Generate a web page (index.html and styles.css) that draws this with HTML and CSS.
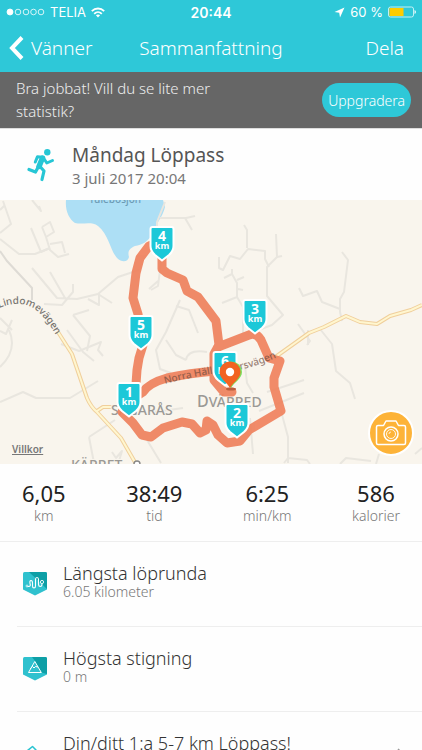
FILE: index.html
```html
<!DOCTYPE html>
<html lang="sv">
<head>
    <meta charset="UTF-8">
    <meta name="viewport" content="width=device-width, initial-scale=1.0">
    <title>Sammanfattning</title>
    <link rel="stylesheet" href="styles.css">
</head>
<body>
    <div class="app-container">
        <header class="top-bar">
            <div class="status-bar">
                <div class="status-left">
                    <svg class="signal" width="39" height="8" viewBox="0 0 39 8" fill="none" stroke="#fff" stroke-width="0.8">
                        <circle cx="4" cy="4" r="3" fill="#fff"/>
                        <circle cx="12" cy="4" r="2.8"/>
                        <circle cx="20" cy="4" r="2.8"/>
                        <circle cx="27.5" cy="4" r="2.8"/>
                        <circle cx="35" cy="4" r="2.8"/>
                    </svg>
                    <span>TELIA</span>
                    <svg width="14" height="11" viewBox="0 0 14 11" fill="none" stroke="#fff" stroke-width="1.8">
                        <path d="M0.8 4.2C4.4 0.6 9.6 0.6 13.2 4.2"/>
                        <path d="M3.2 6.8C5.4 4.6 8.6 4.6 10.8 6.8"/>
                        <path d="M4.9 8.3C6.1 7.2 7.9 7.2 9.1 8.3L7 10.6Z" fill="#fff" stroke="none"/>
                    </svg>
                </div>
                <div class="status-time">20:44</div>
                <div class="status-right">
                    <svg width="11" height="11" viewBox="0 0 11 11" fill="#fff">
                        <path d="M10.5 0.5L6 10.5L5.2 5.8L0.5 5Z"/>
                    </svg>
                    <span>60 %</span>
                    <svg width="28" height="12" viewBox="0 0 28 12">
                        <rect x="0.5" y="1" width="25" height="10" rx="2" fill="none" stroke="#c5f0f4"/>
                        <rect x="1.5" y="2" width="14" height="8" fill="#ffcc00"/>
                        <path d="M26.5 4v4q1.5-0.6 1.5-2t-1.5-2z" fill="#e8fafb"/>
                    </svg>
                </div>
            </div>
            <nav class="nav-bar">
                <a href="#" class="nav-link">
                    <svg width="15" height="24" viewBox="0 0 15 24" fill="none" stroke="#fff" stroke-width="4">
                        <path d="M13 1.5L3 12L13 22.5"/>
                    </svg>
                    Vänner
                </a>
                <h1 class="nav-title">Sammanfattning</h1>
                <a href="#" class="nav-link nav-share">Dela</a>
            </nav>
        </header>

        <section class="banner">
            <p class="banner-text">Bra jobbat! Vill du se lite mer statistik?</p>
            <button type="button" class="upgrade-button">Uppgradera</button>
        </section>

        <section class="workout">
            <svg class="runner" width="28" height="34" viewBox="0 0 28 34" fill="none" stroke="#26c6d5" stroke-linecap="round" stroke-linejoin="round">
                <circle cx="20.3" cy="4.2" r="3.2" fill="#26c6d5" stroke="none"/>
                <path d="M8.3 14L10.5 8.7L15.5 9.2" stroke-width="3"/>
                <path d="M15.5 10L12 18.5" stroke-width="5.5"/>
                <path d="M16.5 10L19.8 15L25.5 12.5" stroke-width="3"/>
                <path d="M11.5 18.5L8.5 24L2 21.5" stroke-width="3.2"/>
                <path d="M13 18.5L17 23L15 31.5" stroke-width="3.2"/>
            </svg>
            <div>
                <h2 class="workout-title">Måndag Löppass</h2>
                <div class="workout-date">3 juli 2017 20:04</div>
            </div>
        </section>

        <section class="map-container">
            <svg class="map" viewBox="0 200 422 264">
                <defs>
                    <path id="badge" d="M-9.5 -15H9.5Q11.5 -15 11.5 -13V4Q11.5 9 7 13L0 18.5L-7 13Q-11.5 9 -11.5 4V-13Q-11.5 -15 -9.5 -15Z"/>
                    <path id="lindome" d="M-1 308Q20 299 36 310Q48 319 64 349"/>
                    <path id="norra" d="M165 384Q190 377 218 373Q250 371 286 353"/>
                </defs>

                <!-- vatten -->
                <path class="lake" d="M66 200C65 211 69 219 75 223C83 225 91 221 98 226C109 235 110 250 117 258C122 263 128 262 129 257C127 250 131 248 135 246C142 245 148 242 154 232C155 224 163 217 165 207L163 200Z"/>

                <!-- småvägar -->
                <g class="streets">
                    <path d="M0 210L5 205M3 201L11 224L0 233M32 200L41 211L39 206M0 239L19 254H35L50 248"/>
                    <path d="M31 228L41 252L50 248M42 227L50 222L54 232L46 237L42 227M46 237L50 250L58 257L69 254M50 244L62 242L65 253"/>
                    <path d="M32 268L57 298L77 299L98 294L118 277L139 270M50 272L65 298M73 284V292L62 305L44 304M98 294L112 303M88 299L99 305V293"/>
                    <path d="M165 202L157 222V231M160 218H186L195 216M185 218L192 230M161 262L158 286L151 290M158 281L149 289"/>
                    <path d="M180 300L166 332L156 350L160 369L171 373M176 306L189 310L198 333M186 360Q188 349 207 352M166 340L176 355L186 360"/>
                    <path d="M73 315L90 336L87 351M73 315L89 310M0 318L12 330M0 331L6 334L12 320M9 330Q18 350 0 367"/>
                    <path d="M67 330L83 352L94 361M61 344L79 351L101 342L98 350L103 356M0 402L23 392L36 398H70L98 381"/>
                    <path d="M89 437L115 420M89 437L94 463M112 452L116 458L122 451L119 461M147 440L161 463M155 412L183 408"/>
                    <path d="M244 225L247 230V248M219 257V268L223 270L230 256L240 259L248 249L265 251V259L269 267M276 234L277 257L267 267V296L283 315L272 325L253 332"/>
                    <path d="M232 269V274L237 283V297L243 307V333M224 278L232 274M237 280L244 277M238 289L243 290M237 297L222 303M277 257L282 256"/>
                    <path d="M342 252L348 260L344 292L340 299V312L342 321M299 288L303 296L317 291L322 302L340 309M298 324L310 341L307 345"/>
                    <path d="M320 329L332 344L336 371L350 383L355 399M267 392L304 380M259 411L304 393M281 411L288 437V463M250 418L253 454M284 463L288 458L307 460L310 464M340 464L346 458L371 461M376 464L379 454M415 454L422 448"/>
                    <path d="M245 366L247 383L253 393M308 330V345"/>
                </g>
                <path class="street-line" d="M0 251L7 261L32 288V300"/>

                <!-- större vägar -->
                <path class="road-edge" d="M58 332L72 354L87 398Q91 407 97 412L121 438L136 464M97 411L103 407H115M274 358L309 333L324 327L346 316L360 322L377 324L390 316L411 310L422 305"/>
                <path class="road-core" d="M58 332L72 354L87 398Q91 407 97 412L121 438L136 464M97 411L103 407H115M274 358L309 333L324 327L346 316L360 322L377 324L390 316L411 310L422 305"/>

                <g class="map-text">
                    <text class="water-name" x="89" y="203">Tulebosjön</text>
                    <text class="place" x="111" y="415">SAGARÅS</text>
                    <text class="place" x="197" y="407"><tspan class="place-first">D</tspan>VÄRRED</text>
                    <text class="place" x="71" y="470">KÄRRET</text>
                    <text class="road-name"><textPath href="#lindome">Lindomevägen</textPath></text>
                </g>
                <circle cx="137" cy="464" r="3" fill="#fff" stroke="#888" stroke-width="1.4"/>

                <!-- löprundan -->
                <g class="route">
                    <path d="M229 374L215 371Q190 373 167 378Q149 383 143 392L129 401L122 412L133 423L142 435L151 437L163 428L182 422L192 424L200 433L206 430L207 421L213 425L218 435L227 443L240 441L249 430L281 411L274 387V378L280 361L269 358L261 340Q256 332 249 335L218 347"/>
                    <path d="M135 398L137 370L139 358L143 345L138 314L133 298L136 273L140 258L149 246L162 240V269L167 273L183 280L187 291L198 297L216 321L219 345L214 354V380L224 392H232"/>
                </g>
                <text class="road-name road-over"><textPath href="#norra">Norra Hällesåkersvägen</textPath></text>

                <!-- kilometermarkörer -->
                <g class="marker" transform="translate(255 315)"><use href="#badge"/><text class="marker-num" y="-1">3</text><text class="marker-unit" y="7">km</text></g>
                <g class="marker" transform="translate(162 242)"><use href="#badge"/><text class="marker-num" y="-1">4</text><text class="marker-unit" y="7">km</text></g>
                <g class="marker" transform="translate(141 331)"><use href="#badge"/><text class="marker-num" y="-1">5</text><text class="marker-unit" y="7">km</text></g>
                <g class="marker" transform="translate(129 398)"><use href="#badge"/><text class="marker-num" y="-1">1</text><text class="marker-unit" y="7">km</text></g>
                <g class="marker" transform="translate(225 367)"><use href="#badge"/><text class="marker-num" y="-1">6</text><text class="marker-unit" y="7">km</text></g>
                <g class="marker" transform="translate(237 419)"><use href="#badge"/><text class="marker-num" y="-1">2</text><text class="marker-unit" y="7">km</text></g>

                <!-- start och mål -->
                <ellipse cx="231" cy="389" rx="5" ry="1.5" fill="#b95d3d"/>
                <path d="M231 388C228 382 221 379 221 372A10.5 10.5 0 0 1 242 372C242 379 234 382 231 388Z" fill="#7be05c"/>
                <path d="M230 388C227 382 219.5 379 219.5 372A10.5 10.5 0 0 1 240.5 372C240.5 379 233 382 230 388Z" fill="#f26322"/>
                <circle cx="230" cy="372" r="4.2" fill="#fff"/>
            </svg>
            <a href="#" class="terms-link">Villkor</a>
            <button type="button" class="camera-button" aria-label="Kamera">
                <svg width="32" height="28" viewBox="0 0 32 28" fill="none" stroke="#fff" stroke-width="1.5" stroke-linejoin="round">
                    <path d="M3 6.5H8.5L11 2H21L23.5 6.5H29Q30.5 6.5 30.5 8V24Q30.5 25.5 29 25.5H3Q1.5 25.5 1.5 24V8Q1.5 6.5 3 6.5Z"/>
                    <circle cx="16" cy="15" r="7"/>
                    <circle cx="16" cy="15" r="4.5" stroke-width="0.9"/>
                    <path d="M14 15Q14 13 16 13" stroke-width="0.8"/>
                </svg>
            </button>
        </section>

        <section class="stats">
            <div class="stat">
                <div class="stat-value">6,05</div>
                <div class="stat-label">km</div>
            </div>
            <div class="stat">
                <div class="stat-value">38:49</div>
                <div class="stat-label">tid</div>
            </div>
            <div class="stat">
                <div class="stat-value">6:25</div>
                <div class="stat-label">min/km</div>
            </div>
            <div class="stat">
                <div class="stat-value">586</div>
                <div class="stat-label">kalorier</div>
            </div>
        </section>

        <ul class="records">
            <li class="record">
                <svg class="record-icon" width="24" height="24" viewBox="0 0 24 24">
                    <path d="M1.5 0H22.5Q24 0 24 1.5V17.5L12 23.5L0 17.5V1.5Q0 0 1.5 0Z" fill="#2fc1ce"/>
                    <path d="M6 0H22.5Q24 0 24 1.5V17Z" fill="#0e9fa6"/>
                    <path d="M4.5 14.5H6Q8 14 7 11.5Q6.5 8.5 8 8.5Q9.5 8.5 9.5 11V14Q9.5 16 11 16Q12.5 16 12.5 14V7.5Q12.5 5.5 14 5.5Q15.5 5.5 15.5 7.5V12.5Q15.5 14.5 17.3 14.5Q19 14.5 19 12" fill="none" stroke="#fff" stroke-width="1.1"/>
                    <circle cx="4" cy="14" r="1" fill="none" stroke="#fff" stroke-width="0.7"/>
                    <circle cx="19" cy="10" r="1.6" fill="none" stroke="#fff" stroke-width="0.9"/>
                </svg>
                <div class="record-body">
                    <h3 class="record-title">Längsta löprunda</h3>
                    <div class="record-value">6.05 kilometer</div>
                </div>
            </li>
            <li class="record">
                <svg class="record-icon" width="24" height="24" viewBox="0 0 24 24">
                    <path d="M1.5 0H22.5Q24 0 24 1.5V17.5L12 23.5L0 17.5V1.5Q0 0 1.5 0Z" fill="#2fc1ce"/>
                    <path d="M12 4L9 0H22.5Q24 0 24 1.5V17L18.5 15.5Z" fill="#0e9fa6"/>
                    <path d="M5.5 15.5L11.8 4.5L18.3 15.5ZM7 12L9.5 9.5L11 11L12.5 9.5L15 10" fill="none" stroke="#fff" stroke-width="1" stroke-linejoin="round"/>
                </svg>
                <div class="record-body">
                    <h3 class="record-title">Högsta stigning</h3>
                    <div class="record-value">0 m</div>
                </div>
            </li>
            <li class="record">
                <svg class="record-icon" width="24" height="24" viewBox="0 0 24 24" fill="none" stroke="#2bc4d2" stroke-width="1.6" stroke-linejoin="round">
                    <path d="M4 9L9.5 4.5L12 7L22 18L17 21L4 9Z"/>
                </svg>
                <div class="record-body">
                    <h3 class="record-title">Din/ditt 1:a 5-7 km Löppass!</h3>
                </div>
                <svg class="chevron" width="8" height="14" viewBox="0 0 8 14" fill="none" stroke="#999" stroke-width="1.5">
                    <path d="M1 1L7 7L1 13"/>
                </svg>
            </li>
        </ul>
    </div>
</body>
</html>
```
FILE: styles.css
```css
* {
    margin: 0;
    padding: 0;
    box-sizing: border-box;
}

body {
    height: 100vh;
    overflow: hidden;
    background-color: #fefefe;
    font-family: 'Noto Sans', 'Open Sans', sans-serif;
    font-weight: 300;
    color: #333;
}

h1, h2, h3 {
    font-weight: inherit;
}

a {
    color: inherit;
    text-decoration: none;
}

button {
    border: none;
    font: inherit;
    color: white;
    cursor: pointer;
}

.app-container {
    width: 100%;
}

.top-bar {
    background-color: #2ec8d8;
    color: white;
}

.status-bar {
    height: 24px;
    padding: 0 6px;
    display: grid;
    grid-template-columns: 1fr auto 1fr;
    align-items: center;
    font-family: Inter, 'Liberation Sans', sans-serif;
    font-size: 13px;
    font-weight: 400;
}

.status-left, .status-right {
    display: flex;
    align-items: center;
    gap: 5px;
}

.status-right {
    justify-content: flex-end;
}

.status-time {
    font-weight: 600;
    font-size: 14px;
}

.nav-bar {
    height: 48px;
    padding: 0 9px;
    display: grid;
    grid-template-columns: 1fr auto 1fr;
    align-items: center;
    font-size: 19px;
}

.nav-link {
    display: flex;
    align-items: center;
    gap: 7px;
}

.nav-share {
    justify-content: flex-end;
    padding-right: 9px;
}

.nav-title {
    font-size: 19px;
}

.banner {
    height: 56px;
    padding: 0 11px 0 16px;
    display: flex;
    justify-content: space-between;
    align-items: center;
    background-color: #666;
    color: #eee;
}

.banner-text {
    max-width: 220px;
    font-size: 15px;
    line-height: 23px;
}

.upgrade-button {
    height: 34px;
    padding: 0 6px;
    border-radius: 17px;
    background-color: #2ec8d8;
    font-size: 14px;
}

.workout {
    height: 72px;
    padding: 0 27px;
    display: flex;
    align-items: center;
    gap: 17px;
    border-top: 1px solid #ddd;
    color: #555;
}

.workout-title {
    font-size: 19px;
    line-height: 26px;
    font-weight: 400;
}

.workout-date {
    font-size: 15px;
    line-height: 20px;
    font-weight: 400;
    color: #777;
}

.map-container {
    position: relative;
    background-color: #f9f5ed;
}

.map {
    display: block;
    width: 100%;
    height: auto;
}

.lake {
    fill: #addff5;
}

.streets {
    fill: none;
    stroke: #e9e6df;
    stroke-width: 2;
    stroke-linejoin: round;
}

.street-line {
    fill: none;
    stroke: #dedbd5;
    stroke-width: 2;
}

.road-edge {
    fill: none;
    stroke: #f0cf9c;
    stroke-width: 4;
    stroke-linejoin: round;
}

.road-core {
    fill: none;
    stroke: #fff6cf;
    stroke-width: 2;
    stroke-linejoin: round;
}

.map-text, .road-over {
    font-family: 'Noto Sans', sans-serif;
    font-weight: 500;
}

.place {
    font-size: 14px;
    fill: #9b9995;
    stroke: #f9f5ed;
    stroke-width: 2;
    paint-order: stroke;
}

.place-first {
    font-size: 16px;
}

.water-name {
    font-size: 10px;
    fill: #6c9bb5;
}

.road-name {
    font-size: 10px;
    fill: #77746f;
}

.route {
    fill: none;
    stroke: #ef7f5a;
    stroke-width: 9;
    stroke-linejoin: round;
    stroke-linecap: round;
    opacity: 0.9;
}

.road-over {
    fill: #6d4a3d;
    opacity: 0.7;
}

.marker {
    fill: #1cc8d8;
    stroke: white;
    stroke-width: 2;
}

.marker text {
    fill: white;
    stroke: none;
    text-anchor: middle;
    font-family: 'Noto Sans', sans-serif;
    font-weight: 700;
}

.marker-num {
    font-size: 14px;
}

.marker-unit {
    font-size: 9px;
}

.terms-link {
    position: absolute;
    left: 12px;
    bottom: 8px;
    font-size: 10px;
    font-weight: 600;
    text-decoration: underline;
    color: #777;
}

.camera-button {
    position: absolute;
    right: 8px;
    bottom: 8px;
    width: 46px;
    height: 46px;
    border: 2px solid white;
    border-radius: 50%;
    background-color: #fdb338;
    display: flex;
    justify-content: center;
    align-items: center;
}

.stats {
    height: 78px;
    padding: 15px 22px 0;
    display: flex;
    justify-content: space-between;
    border-bottom: 1px solid #eee;
    text-align: center;
}

.stat-value {
    font-size: 22px;
    line-height: 28px;
    font-weight: 400;
    color: #222;
}

.stat-label {
    font-size: 14px;
    line-height: 18px;
    color: #777;
}

.records {
    margin-left: 17px;
    list-style: none;
}

.record {
    height: 85px;
    padding: 20px 17px 0 6px;
    display: flex;
    align-items: flex-start;
    gap: 16px;
    border-bottom: 1px solid #eee;
}

.record-icon {
    margin-top: 10px;
}

.record-body {
    flex: 1;
}

.record-title {
    font-size: 18px;
    line-height: 22px;
}

.record-value {
    font-size: 14px;
    line-height: 16px;
    color: #777;
}

.chevron {
    margin-top: 16px;
}
```
